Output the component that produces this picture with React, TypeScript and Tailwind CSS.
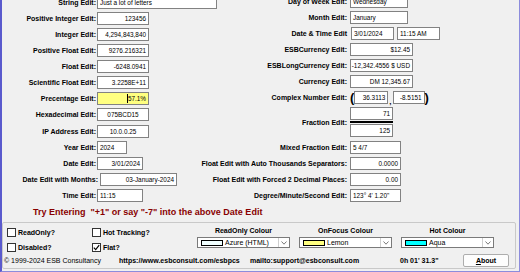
import React from "react";

type Align = "l" | "r" | "c";
const alignCls: Record<Align, string> = { l: "justify-start", r: "justify-end", c: "justify-center" };

function Box({ w, align = "r", bg = "bg-white", extra = "", children }: { w: string; align?: Align; bg?: string; extra?: string; children?: React.ReactNode }) {
  return (
    <div className={`${w} ${alignCls[align]} ${bg} ${extra} h-[13px] shrink-0 border border-[#828282] flex items-center px-[2px] text-[6.4px] whitespace-nowrap overflow-hidden`}>
      {children}
    </div>
  );
}

function LRow({ label, lw = "w-[95px] pr-[1px]", mt = "mt-[3px]", children }: { label: string; lw?: string; mt?: string; children: React.ReactNode }) {
  return (
    <div className={`flex items-center h-[13px] ${mt}`}>
      <div className={`${lw} shrink-0 flex justify-end font-bold whitespace-nowrap`}>
        <span>{label}</span>
      </div>
      {children}
    </div>
  );
}

function RRow({ label, mt = "mt-[3px]", h = "h-[13px]", children }: { label: string; mt?: string; h?: string; children: React.ReactNode }) {
  return (
    <div className={`flex items-center ${h} ${mt}`}>
      <div className="w-[112px] pr-[3px] shrink-0 flex justify-end font-bold whitespace-nowrap">
        <span>{label}</span>
      </div>
      {children}
    </div>
  );
}

function Check({ label, checked = false }: { label: string; checked?: boolean }) {
  return (
    <div className="flex items-center h-[9px]">
      <div className="w-[9px] h-[9px] shrink-0 border border-[#333333] bg-white flex items-center justify-center">
        {checked && (
          <svg width="7" height="7" viewBox="0 0 7 7">
            <polyline points="0.8,3.6 2.7,5.6 6.2,1.2" fill="none" stroke="#000" strokeWidth="1.2" />
          </svg>
        )}
      </div>
      <span className="ml-[2px] font-bold whitespace-nowrap">{label}</span>
    </div>
  );
}

function ColourGroup({ title, swatch, text, extra = "" }: { title: string; swatch: string; text: string; extra?: string }) {
  return (
    <div className={`w-[93px] shrink-0 pt-[3px] flex flex-col items-center ${extra}`}>
      <div className="font-bold leading-[9px] h-[9px] whitespace-nowrap">{title}</div>
      <div className="mt-[2px] w-[93px] h-[11px] border border-[#7a7a7a] bg-white flex items-center">
        <div className={`ml-[3px] w-[22px] h-[6px] border border-black shrink-0 ${swatch}`} />
        <span className="ml-[2px] whitespace-nowrap">{text}</span>
        <div className="ml-auto h-full w-[11px] border-l border-[#cfcfcf] flex items-center justify-center">
          <svg width="6" height="4" viewBox="0 0 6 4">
            <polyline points="0.5,0.5 3,3.2 5.5,0.5" fill="none" stroke="#7a7a7a" strokeWidth="1" />
          </svg>
        </div>
      </div>
    </div>
  );
}

export default function App() {
  return (
    <div className="w-[520px] h-[272px] overflow-hidden bg-[#f0f0f0] border-l-2 border-r border-b border-l-[#5a5acd] border-r-[#8c8cdc] border-b-[#8c8cdc] flex flex-col font-['Liberation_Sans',Arial,sans-serif] text-[7px] leading-[9px] text-black">
      {/* form area */}
      <div className="flex -mt-[4px]">
        {/* left column */}
        <div className="w-[236px] shrink-0 flex flex-col">
          <LRow label="String Edit:" mt="mt-0">
            <Box w="w-[120px]" align="l">Just a lot of letters</Box>
          </LRow>
          <LRow label="Positive Integer Edit:"><Box w="w-[52px]">123456</Box></LRow>
          <LRow label="Integer Edit:"><Box w="w-[52px]">4,294,843,840</Box></LRow>
          <LRow label="Positive Float Edit:"><Box w="w-[52px]">9276.216321</Box></LRow>
          <LRow label="Float Edit:"><Box w="w-[52px]">-6248.0941</Box></LRow>
          <LRow label="Scientific Float Edit:"><Box w="w-[52px]">3.2258E+11</Box></LRow>
          <LRow label="Precentage Edit:">
            <Box w="w-[52px]" bg="bg-[#ffff80]">
              <span className="w-[1px] h-[9px] bg-black" />
              <span>57.1%</span>
            </Box>
          </LRow>
          <LRow label="Hexadecimal Edit:"><Box w="w-[52px]" align="c">075BCD15</Box></LRow>
          <LRow label="IP Address Edit:" mt="mt-[4px]"><Box w="w-[52px]" align="c">10.0.0.25</Box></LRow>
          <LRow label="Year Edit:"><Box w="w-[30px]" align="l">2024</Box></LRow>
          <LRow label="Date Edit:"><Box w="w-[46px]">3/01/2024</Box></LRow>
          <LRow label="Date Edit with Months:" lw="w-[98px] pr-[2px]"><Box w="w-[77px]">03-January-2024</Box></LRow>
          <LRow label="Time Edit:"><Box w="w-[46px]" align="l">11:15</Box></LRow>
        </div>

        {/* right column */}
        <div className="flex flex-col -mt-[1px]">
          <RRow label="Day of Week Edit:" mt="mt-0"><Box w="w-[58px]" align="l">Wednesday</Box></RRow>
          <RRow label="Month Edit:"><Box w="w-[58px]" align="l">January</Box></RRow>
          <RRow label="Date & Time Edit">
            <Box w="w-[43px]" align="l" extra="ml-[1px]">3/01/2024</Box>
            <Box w="w-[43px]" align="l" extra="ml-[3px]">11:15 AM</Box>
          </RRow>
          <RRow label="ESBCurrency Edit:"><Box w="w-[63px]">$12.45</Box></RRow>
          <RRow label="ESBLongCurrency Edit:"><Box w="w-[63px]">-12,342.4556 $ USD</Box></RRow>
          <RRow label="Currency Edit:"><Box w="w-[63px]">DM 12,345.67</Box></RRow>
          <RRow label="Complex Number Edit:">
            <div className="flex items-center h-[13px]">
              <span className="font-bold text-[13px] leading-[13px] -mt-[1px]">(</span>
              <Box w="w-[34px]">36.3113</Box>
              <span className="font-bold text-[8px] self-end leading-[8px] mx-[1px] translate-y-[2px]">,</span>
              <Box w="w-[32px]">-8.5151</Box>
              <span className="font-bold text-[13px] leading-[13px] -mt-[1px]">)</span>
            </div>
          </RRow>
          <RRow label="Fraction Edit:" h="h-[30px]">
            <div className="flex flex-col w-[43px]">
              <Box w="w-[43px]">71</Box>
              <div className="mt-[1px] h-[2px] bg-black" />
              <Box w="w-[43px]" extra="mt-[1px]">125</Box>
            </div>
          </RRow>
          <RRow label="Mixed Fraction Edit:" mt="mt-[4px]"><Box w="w-[51px]" align="l">5 4/7</Box></RRow>
          <RRow label="Float Edit with Auto Thousands Separators:"><Box w="w-[51px]">0.0000</Box></RRow>
          <RRow label="Float Edit with Forced 2 Decimal Places:"><Box w="w-[51px]">0.00</Box></RRow>
          <RRow label="Degree/Minute/Second Edit:"><Box w="w-[51px]" align="l">{`123° 4' 1.20"`}</Box></RRow>
        </div>
      </div>

      {/* hint */}
      <div className="mt-[6px] pl-[31px] h-[9px] text-[9px] leading-[9px] font-bold text-[#880000] whitespace-pre">
        {`Try Entering  "+1" or say "-7" into the above Date Edit`}
      </div>

      {/* bottom panel */}
      <div className="mt-[5px] mr-[3px] border border-[#c9c9c9] rounded-[2px] flex flex-col">
        <div className="flex h-[30px]">
          <div className="w-[89px] shrink-0 pl-[4px] pt-[5px] flex flex-col gap-[6px]">
            <Check label="ReadOnly?" />
            <Check label="Disabled?" />
          </div>
          <div className="w-[105px] shrink-0 pt-[5px] flex flex-col gap-[6px]">
            <Check label="Hot Tracking?" />
            <Check label="Flat?" checked />
          </div>
          <ColourGroup title="ReadOnly Colour" swatch="bg-[#f0ffff]" text="Azure (HTML)" />
          <ColourGroup title="OnFocus Colour" swatch="bg-[#ffff80]" text="Lemon" extra="ml-[9px]" />
          <ColourGroup title="Hot Colour" swatch="bg-[#00ffff]" text="Aqua" extra="ml-[9px]" />
        </div>
        <div className="flex items-center h-[15px] whitespace-nowrap">
          <span className="w-[116px] shrink-0 pl-[1px]">© 1999-2024 ESB Consultancy</span>
          <span className="w-[131px] shrink-0 font-bold">https://www.esbconsult.com/esbpcs</span>
          <span className="w-[150px] shrink-0 font-bold">mailto:support@esbconsult.com</span>
          <span className="w-[63px] shrink-0 font-bold">{`0h 01' 31.3"`}</span>
          <button className="w-[46px] h-[13px] shrink-0 border border-[#adadad] bg-[#fdfdfd] rounded-[2px] font-bold text-[7px] leading-[9px] flex items-center justify-center">
            <span className="underline">A</span>bout
          </button>
        </div>
      </div>
    </div>
  );
}
